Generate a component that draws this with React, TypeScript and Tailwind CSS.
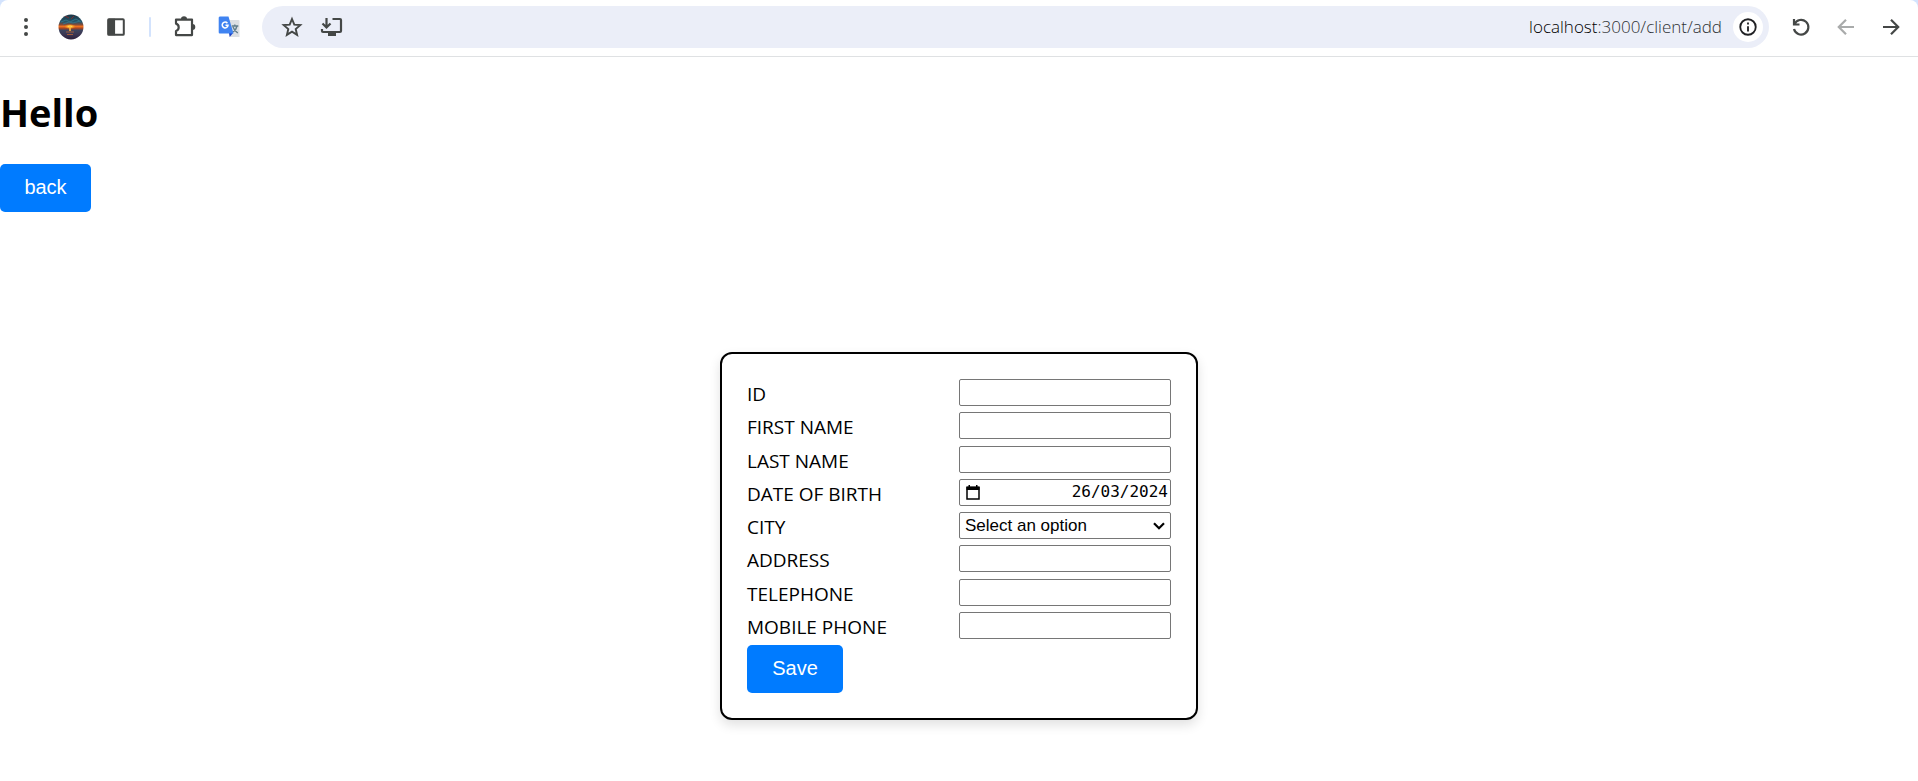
import React from "react";

function Icon({ className = "size-6", children }: { className?: string; children: React.ReactNode }) {
  return (
    <svg viewBox="0 0 24 24" className={className} fill="none" stroke="currentColor" strokeWidth="2.2" aria-hidden="true">
      {children}
    </svg>
  );
}

function ToolButton({ label, className = "text-[#444746]", children }: { label: string; className?: string; children: React.ReactNode }) {
  return (
    <button type="button" aria-label={label} className={`flex h-8 w-8 shrink-0 items-center justify-center ${className}`}>
      {children}
    </button>
  );
}

function Avatar() {
  return (
    <svg viewBox="0 0 26 26" className="size-[26px]" aria-hidden="true">
      <defs>
        <clipPath id="avatar-clip"><circle cx="13" cy="13" r="12.5" /></clipPath>
        <linearGradient id="sky" x1="0" y1="0" x2="0" y2="1">
          <stop offset="0" stopColor="#1c3444" />
          <stop offset=".3" stopColor="#24566b" />
          <stop offset=".4" stopColor="#7a4a3c" />
          <stop offset=".48" stopColor="#f0701c" />
          <stop offset=".56" stopColor="#9a4428" />
          <stop offset=".62" stopColor="#3d4560" />
          <stop offset=".8" stopColor="#3a3450" />
          <stop offset="1" stopColor="#2a1c38" />
        </linearGradient>
        <radialGradient id="sun">
          <stop offset="0" stopColor="#fff3a0" />
          <stop offset=".4" stopColor="#ffb52a" />
          <stop offset="1" stopColor="#f07a1c" stopOpacity="0" />
        </radialGradient>
      </defs>
      <g clipPath="url(#avatar-clip)">
        <rect width="26" height="26" fill="url(#sky)" />
        <path d="M3 8l5-2 4 2 6-3 5 3M5 10l6-2 4 1 7-2" stroke="#347085" fill="none" />
        <path d="M7 2l4 2M16 2l-3 3" stroke="#7c2f2f" fill="none" />
        <ellipse cx="12" cy="12.5" rx="6" ry="2.5" fill="url(#sun)" />
        <path d="M12 12v5" stroke="#ffb53a" strokeWidth="1.6" />
        <path d="M8 18h8M9 20.500h6" stroke="#a05a3c" />
      </g>
    </svg>
  );
}

function Toolbar() {
  return (
    <header className="bg-[#d3e3fd]">
      <div className="flex h-[57px] items-start rounded-t-lg border-b border-[#dfe1e3] bg-white pt-[11px]">
        <ToolButton label="Menu" className="ml-[10px] text-[#444746]">
          <svg viewBox="0 0 24 24" className="size-6" fill="currentColor" aria-hidden="true">
            <circle cx="12" cy="5" r="2" /><circle cx="12" cy="12" r="2" /><circle cx="12" cy="19" r="2" />
          </svg>
        </ToolButton>
        <ToolButton label="Profile" className="ml-[13px]"><Avatar /></ToolButton>
        <ToolButton label="Side panel" className="ml-[13px] text-[#444746]">
          <Icon className="size-[22px]"><rect x="3.5" y="3.5" width="17" height="17" rx="1" /><path d="M3 3h8v18H3z" fill="currentColor" stroke="none" /></Icon>
        </ToolButton>
        <div className="mt-1.5 ml-[17px] h-5 w-0.5 rounded-full bg-[#d3e3fd]" />
        <ToolButton label="Extensions" className="ml-[17px] text-[#444746]">
          <Icon>
            <path d="M4 4.600h16v15.500H4V16c3.600-1.200 3.600-6.200 0-7.400z" strokeLinejoin="round" />
            <path d="M9 4a3 2.800 0 0 1 6 0zM20.500 9a2.800 3 0 0 1 0 6z" fill="currentColor" stroke="none" />
          </Icon>
        </ToolButton>
        <ToolButton label="Translate" className="ml-[13px]">
          <svg viewBox="0 0 24 24" className="size-6" aria-hidden="true">
            <path d="M9 5h12.500a1 1 0 0 1 1 1v16h-9.500z" fill="#dcdfe3" />
            <path d="M12 18h4l-3.300 4z" fill="#1a3fc4" />
            <path d="M3 1.500h8.500l5 17H3A1.300 1.300 0 0 1 1.700 17V3A1.300 1.300 0 0 1 3 1.500z" fill="#3f83f1" />
            <path d="M10.400 8.200A2.900 2.900 0 1 0 11 10.300H8.500" stroke="#fff" strokeWidth="1.500" fill="none" />
            <path d="M14.800 11h6.500M17.800 9.500V11M20 11c-.5 2.500-2 4.800-4 6M16 12c.8 2.200 2.500 4.500 4.800 6" stroke="#607d8b" strokeWidth="1.400" fill="none" />
          </svg>
        </ToolButton>
        <div className="-mt-[5px] ml-[17px] flex h-[42px] flex-1 items-center rounded-full bg-[#ebeef8] pr-[6px] pl-[14px]">
          <ToolButton label="Bookmark">
            <Icon><path d="M12 4l2.300 5.600 6 .5-4.600 3.900 1.400 5.900-5.100-3.200-5.100 3.200L8.300 14l-4.600-3.900 6-.5z" strokeWidth="1.900" /></Icon>
          </ToolButton>
          <ToolButton label="Install" className="ml-2 text-[#444746]">
            <Icon>
              <path d="M12.500 4H20a1 1 0 0 1 1 1v11a1 1 0 0 1-1 1H3a1 1 0 0 1-1-1v-2M6.500 3v9M2.500 8.500l4 4 4-4" />
              <path d="M8 17h8v4H8z" fill="currentColor" stroke="none" />
            </Icon>
          </ToolButton>
          <div role="textbox" aria-label="Address bar" tabIndex={0} className="flex-1 pr-[11px] text-right text-[17px] font-light text-[#2f3235]">
            <span className="text-black">localhost</span>:3000/client/add
          </div>
          <button type="button" aria-label="Site information" className="flex size-[30px] items-center justify-center rounded-full bg-white text-[#202124]">
            <Icon className="size-5"><circle cx="12" cy="12" r="9.300" /><path d="M12 11v6.500M12 6.500v2.500" /></Icon>
          </button>
        </div>
        <ToolButton label="Reload" className="ml-[16px] text-[#444746]">
          <Icon><path d="M5 4v5.500h5.500M5.500 9A7.300 7.300 0 1 1 5 14" /></Icon>
        </ToolButton>
        <ToolButton label="Forward" className="ml-[13px] text-[#a9abab]">
          <Icon><path d="M20 12H5M12 4.800L4.800 12l7.200 7.200" /></Icon>
        </ToolButton>
        <ToolButton label="Back" className="mr-[11px] ml-[13px] text-[#444746]">
          <Icon><path d="M4 12h15M12 4.800l7.200 7.200-7.200 7.200" /></Icon>
        </ToolButton>
      </div>
    </header>
  );
}

const fieldClass = "h-[27px] w-full rounded-[2px] border border-[#767676] bg-white text-black";

function Row({ id, label, children }: { id: string; label: string; children?: React.ReactNode }) {
  return (
    <div className="grid grid-cols-2 items-start">
      <label htmlFor={id} className="text-[19px] leading-[30px]">{label}</label>
      {children ?? <input id={id} type="text" className={`px-1 text-base ${fieldClass}`} />}
    </div>
  );
}

const buttonClass = "h-12 rounded-[5px] bg-[#007bff] pb-0.5 text-center font-['Liberation_Sans',sans-serif] text-xl text-white";

export default function App() {
  return (
    <div className="min-h-screen bg-white font-['Open_Sans',sans-serif] text-black">
      <Toolbar />
      <main>
        <h1 className="mt-7 text-[38px] leading-[54px] font-bold">Hello</h1>
        <button type="button" className={`mt-[25px] block w-[91px] ${buttonClass}`}>back</button>
        <form className="mx-auto mt-[140px] w-[478px] rounded-xl border-2 border-black bg-white p-[25px] shadow-[0_5px_12px_rgba(0,0,0,0.12)]" onSubmit={(e) => e.preventDefault()}>
          <div className="grid h-[266px] grid-rows-8">
            <Row id="id" label="ID" />
            <Row id="first" label="FIRST NAME" />
            <Row id="last" label="LAST NAME" />
            <Row id="dob" label="DATE OF BIRTH">
              <div className={`flex items-center px-1 ${fieldClass}`}>
                <button type="button" aria-label="Open calendar" className="ml-0.5 shrink-0">
                  <svg viewBox="0 0 14 15" className="h-[15px] w-3.5" aria-hidden="true">
                    <path d="M1 2.500h12v11.500H1z" fill="none" stroke="#000" strokeWidth="1.500" />
                    <path d="M.500 1.500h13V5H.500zM2.500 0h1.500v2H2.500zM10 0h1.500v2H10z" />
                  </svg>
                </button>
                <input id="dob" type="text" inputMode="numeric" defaultValue="26/03/2024" className="-mr-0.5 w-full min-w-0 flex-1 bg-transparent text-right font-['DejaVu_Sans_Mono',monospace] text-base leading-6" />
              </div>
            </Row>
            <Row id="city" label="CITY">
              <div className="grid items-center">
                <select id="city" className={`col-start-1 row-start-1 appearance-none px-[5px] font-['Liberation_Sans',sans-serif] text-[17px] ${fieldClass}`}>
                  <option>Select an option</option>
                </select>
                <svg viewBox="0 0 12 8" className="pointer-events-none col-start-1 row-start-1 mr-1.5 h-2 w-3 justify-self-end" fill="none" stroke="#000" strokeWidth="2.200" aria-hidden="true">
                  <path d="M1 1.200l5 5 5-5" />
                </svg>
              </div>
            </Row>
            <Row id="address" label="ADDRESS" />
            <Row id="telephone" label="TELEPHONE" />
            <Row id="mobile" label="MOBILE PHONE" />
          </div>
          <button type="submit" className={`block w-24 ${buttonClass}`}>Save</button>
        </form>
      </main>
    </div>
  );
}
